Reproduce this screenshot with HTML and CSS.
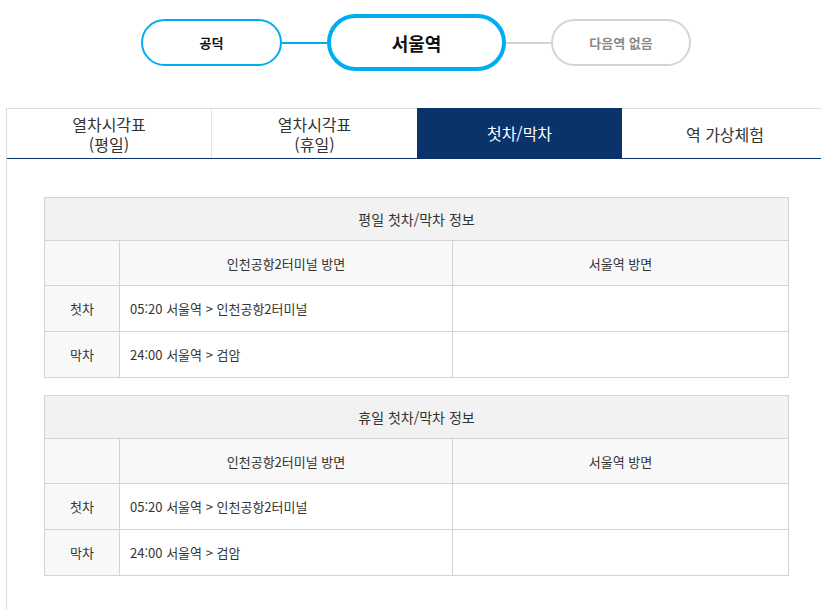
FILE: index.html
```html
<!DOCTYPE html>
<html lang="ko">
<head>
<meta charset="utf-8">
<title>서울역 첫차/막차</title>
<link rel="stylesheet" href="styles.css">
</head>
<body>
<div class="stations">
  <div class="pill pill-prev">공덕</div>
  <div class="link link-on"></div>
  <div class="pill pill-current">서울역</div>
  <div class="link link-off"></div>
  <div class="pill pill-next">다음역 없음</div>
</div>

<div class="panel">
  <div class="tabs">
    <div class="tab tab-1"><span class="tl">열차시각표</span><span class="tl">(평일)</span></div>
    <div class="tab tab-2"><span class="tl">열차시각표</span><span class="tl">(휴일)</span></div>
    <div class="tab tab-3 tab-active">첫차/막차</div>
    <div class="tab tab-4">역 가상체험</div>
  </div>

  <div class="content">
    <table class="info">
      <tr><th class="title" colspan="3">평일 첫차/막차 정보</th></tr>
      <tr class="sub">
        <th class="c1"></th>
        <th class="c2">인천공항2터미널 방면</th>
        <th class="c3">서울역 방면</th>
      </tr>
      <tr>
        <th class="label">첫차</th>
        <td>05:20 서울역 &gt; 인천공항2터미널</td>
        <td></td>
      </tr>
      <tr>
        <th class="label">막차</th>
        <td>24:00 서울역 &gt; 검암</td>
        <td></td>
      </tr>
    </table>

    <table class="info">
      <tr><th class="title" colspan="3">휴일 첫차/막차 정보</th></tr>
      <tr class="sub">
        <th class="c1"></th>
        <th class="c2">인천공항2터미널 방면</th>
        <th class="c3">서울역 방면</th>
      </tr>
      <tr>
        <th class="label">첫차</th>
        <td>05:20 서울역 &gt; 인천공항2터미널</td>
        <td></td>
      </tr>
      <tr>
        <th class="label">막차</th>
        <td>24:00 서울역 &gt; 검암</td>
        <td></td>
      </tr>
    </table>
  </div>
</div>
</body>
</html>
```

FILE: styles.css
```css
html, body {
  margin: 0;
  padding: 0;
  overflow: hidden;
  background: #fff;
}
body {
  font-family: "Noto Sans CJK KR", "Noto Sans", sans-serif;
  color: #333;
  width: 821px;
  height: 610px;
}

.stations {
  display: flex;
  align-items: center;
  padding-top: 14px;
  padding-left: 141px;
  height: 57px;
}
.pill {
  box-sizing: border-box;
  display: flex;
  align-items: center;
  justify-content: center;
  border-radius: 30px;
  font-weight: bold;
  background: #fff;
}
.pill-prev {
  width: 141px;
  height: 47px;
  border: 2px solid #00aeef;
  font-size: 13px;
  color: #111;
}
.pill-current {
  width: 179px;
  height: 57px;
  border: 4px solid #00aeef;
  font-size: 18px;
  color: #111;
}
.pill-next {
  width: 140px;
  height: 47px;
  border: 2px solid #d4d4d4;
  font-size: 13px;
  color: #8a8a8a;
}
.link {
  width: 45px;
  height: 2px;
}
.link-on { background: #00aeef; }
.link-off { background: #d4d4d4; }

.panel {
  margin-top: 37px;
  margin-left: 6px;
  width: 821px;
  border-top: 1px solid #dcdcdc;
  border-left: 1px solid #dcdcdc;
  min-height: 520px;
}
.tabs {
  display: flex;
  border-bottom: 1px solid #0a326b;
  height: 49px;
}
.tab {
  box-sizing: border-box;
  flex: none;
  display: flex;
  flex-direction: column;
  align-items: center;
  justify-content: center;
  text-align: center;
  font-size: 16px;
  line-height: 20px;
  color: #333;
}
.tl {
  display: block;
  height: 20px;
  line-height: 20px;
}
.tab-1 { width: 204px; }
.tab-2 { width: 206px; border-left: 1px solid #e3e3e3; }
.tab-3 { width: 205px; }
.tab-4 { flex: 1; }
.tab-active {
  background: #0a326b;
  color: #fff;
  margin-top: -1px;
}

.content {
  padding: 38px 0 0 37px;
}
.info {
  width: 745px;
  border-collapse: collapse;
  font-size: 13px;
  margin-bottom: 17px;
}
.info th, .info td {
  border: 1px solid #d3d3d3;
  font-weight: normal;
  color: #333;
}
.info .title {
  height: 40px;
  background: #f2f2f2;
  font-size: 14px;
  text-align: center;
}
.info .sub th {
  height: 42px;
  background: #f8f8f8;
  text-align: center;
}
.info .c1 { width: 72px; }
.info .c2 { width: 330px; }
.info .label {
  height: 43px;
  background: #f8f8f8;
  text-align: center;
}
.info td {
  padding: 0 10px;
  background: #fff;
}
```
